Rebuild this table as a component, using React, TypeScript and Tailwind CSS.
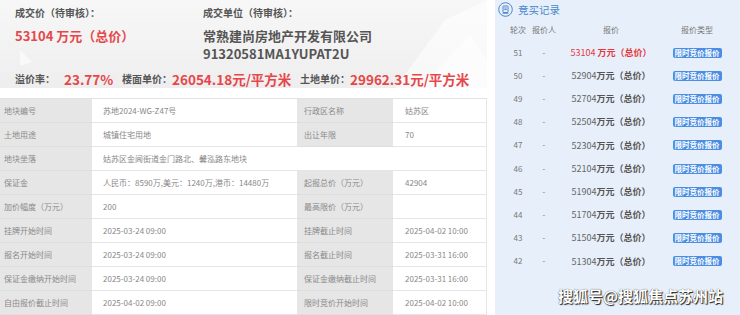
import React from 'react';

const font = "font-['Noto_Sans_CJK_SC','Noto_Sans',sans-serif]";

type Cell = { label: string; value: string };

const tableRows: [Cell, Cell | null][] = [
  [{ label: '地块编号', value: '苏地2024-WG-Z47号' }, { label: '行政区名称', value: '姑苏区' }],
  [{ label: '土地用途', value: '城镇住宅用地' }, { label: '出让年限', value: '70' }],
  [{ label: '地块坐落', value: '姑苏区金阊街道金门路北、馨泓路东地块' }, null],
  [{ label: '保证金', value: '人民币：8590万,美元：1240万,港币：14480万' }, { label: '起报总价（万元）', value: '42904' }],
  [{ label: '加价幅度（万元）', value: '200' }, { label: '最高限价（万元）', value: '' }],
  [{ label: '挂牌开始时间', value: '2025-03-24 09:00' }, { label: '挂牌截止时间', value: '2025-04-02 10:00' }],
  [{ label: '报名开始时间', value: '2025-03-24 09:00' }, { label: '报名截止时间', value: '2025-03-31 16:00' }],
  [{ label: '保证金缴纳开始时间', value: '2025-03-24 09:00' }, { label: '保证金缴纳截止时间', value: '2025-03-31 16:00' }],
  [{ label: '自由报价截止时间', value: '2025-04-02 09:00' }, { label: '限时竞价开始时间', value: '2025-04-02 10:00' }],
];

const bids = [
  { round: 51, price: '53104', latest: true },
  { round: 50, price: '52904' },
  { round: 49, price: '52704' },
  { round: 48, price: '52504' },
  { round: 47, price: '52304' },
  { round: 46, price: '52104' },
  { round: 45, price: '51904' },
  { round: 44, price: '51704' },
  { round: 43, price: '51504' },
  { round: 42, price: '51304' },
];

const Summary = () => (
  <div className="relative h-[88px] bg-gradient-to-b from-[#f7f7f7] to-[#eeeeee] overflow-hidden">
    <svg className="absolute inset-0" width="487" height="88" viewBox="0 0 487 88">
      <polygon points="395,88 445,20 487,0 487,88" fill="#ffffff" opacity="0.55" />
      <polygon points="420,88 470,35 487,60 487,88" fill="#ffffff" opacity="0.5" />
      <polygon points="20,50 32,62 20,66" fill="#ffffff" opacity="0.6" />
    </svg>
    <div className="relative flex pl-[15px] pt-[6px]">
      <div className="w-[188px]">
        <div className="h-[14px] text-[10px] leading-[14px] font-bold text-[#555]">成交价（待审核）：</div>
        <div className="mt-[7px] h-[18px] text-[13px] leading-[18px] font-bold text-[#e5474b] whitespace-nowrap">53104 万元（总价）</div>
      </div>
      <div>
        <div className="h-[14px] text-[10px] leading-[14px] font-bold text-[#555]">成交单位（待审核）：</div>
        <div className="mt-[7px] text-[13px] leading-[18px] font-bold text-[#555] whitespace-nowrap">常熟建尚房地产开发有限公司</div>
        <div className="text-[13px] leading-[17px] font-bold text-[#555]">91320581MA1YUPAT2U</div>
      </div>
    </div>
    <div className="relative flex items-center pl-[15px] mt-[8px] h-[18px] whitespace-nowrap leading-[18px]">
      <span className="w-[49px] shrink-0 text-[10px] font-bold text-[#555]">溢价率：</span>
      <span className="w-[58px] shrink-0 text-[13.5px] font-bold text-[#e5474b]">23.77%</span>
      <span className="w-[50px] shrink-0 text-[10px] font-bold text-[#555]">楼面单价：</span>
      <span className="w-[128px] shrink-0 text-[13.5px] font-bold text-[#e5474b]">26054.18元/平方米</span>
      <span className="w-[50px] shrink-0 text-[10px] font-bold text-[#555]">土地单价：</span>
      <span className="shrink-0 text-[13.5px] font-bold text-[#e5474b]">29962.31元/平方米</span>
    </div>
  </div>
);

const InfoTable = () => (
  <div className="mt-[10px] grid grid-cols-[92px_205px_96px_94px] border-t border-[#e2e2e2] text-[8px]">
    {tableRows.map(([a, b], i) => (
      <React.Fragment key={i}>
        <div className="h-[24px] flex items-center pl-[4px] bg-[#e6e6e6] text-[#8a8a8a] border-b border-[#dedede]">{a.label}</div>
        {b ? (
          <>
            <div className="h-[24px] flex items-center pl-[11px] bg-white text-[#888] border-b border-[#e6e6e6]">{a.value}</div>
            <div className="h-[24px] flex items-center pl-[7px] bg-[#e6e6e6] text-[#8a8a8a] border-b border-[#dedede]">{b.label}</div>
            <div className="h-[24px] flex items-center pl-[12px] bg-white text-[#888] border-b border-r border-[#e6e6e6]">{b.value}</div>
          </>
        ) : (
          <div className="col-span-3 h-[24px] flex items-center pl-[11px] bg-white text-[#888] border-b border-r border-[#e6e6e6]">{a.value}</div>
        )}
      </React.Fragment>
    ))}
  </div>
);

const RecordIcon = () => (
  <svg width="15" height="15" viewBox="0 0 15 15" fill="none" stroke="#4a86cc" strokeWidth="1">
    <circle cx="7.5" cy="7.5" r="6.8" />
    <rect x="5" y="4" width="5" height="6.5" rx="0.6" />
    <path d="M6.3 6h2.4M6.3 7.6h2.4M4.6 11.2h5.8" />
  </svg>
);

const BidRecords = () => (
  <div className="relative ml-[8px] flex-1 bg-[#e7f0fa]">
    <div className="h-[19px] flex items-center pl-[3px] gap-[5px]">
      <RecordIcon />
      <span className="text-[10.5px] text-[#4a86cc]">竞买记录</span>
    </div>
    <div className="h-[22px] flex items-center pl-[10px] text-[8px] text-[#777]">
      <span className="w-[26px] text-center">轮次</span>
      <span className="w-[26px] text-center">报价人</span>
      <span className="w-[108px] text-center">报价</span>
      <span className="w-[64px] text-center">报价类型</span>
    </div>
    {bids.map((b) => (
      <div key={b.round} className="h-[23.2px] flex items-center pl-[10px] text-[8px] text-[#777]">
        <span className="w-[26px] text-center">{b.round}</span>
        <span className="w-[26px] text-center">-</span>
        <span className={`w-[108px] text-center text-[9px] ${b.latest ? 'text-[#e8383d]' : 'text-[#666]'}`}>
          {b.price}
          {b.latest ? ' ' : ''}
          <b className={b.latest ? 'text-[#e8383d]' : 'text-[#555]'}>万元（总价）</b>
        </span>
        <span className="w-[64px] flex justify-center">
          <span className="w-[49px] h-[10px] rounded-[2px] bg-[#4a8ee3] text-white text-[7.5px] leading-[10px] font-bold text-center">
            限时竞价报价
          </span>
        </span>
      </div>
    ))}
    <div className="absolute right-[17px] bottom-[8px] text-[15px] font-bold text-white [text-shadow:1px_1px_1px_#222,0_0_1px_#333]">
      搜狐号@搜狐焦点苏州站
    </div>
  </div>
);

export default function App() {
  return (
    <div className={`w-[740px] h-[315px] overflow-hidden bg-white flex ${font}`}>
      <div className="w-[487px] flex flex-col">
        <Summary />
        <InfoTable />
      </div>
      <BidRecords />
    </div>
  );
}
